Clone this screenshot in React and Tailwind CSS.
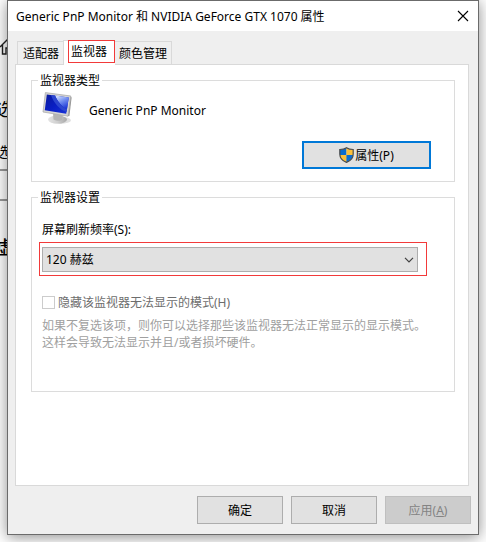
import { useState } from "react";

const TABS = [
  { id: "adapter", label: "适配器" },
  { id: "monitor", label: "监视器" },
  { id: "color", label: "颜色管理" },
];

const RATES = ["120 赫兹", "60 赫兹"];

function MonitorIcon() {
  return (
    <svg viewBox="0 0 32 36" className="w-8 h-9 shrink-0" aria-hidden="true">
      <defs>
        <linearGradient id="screen" x1="0" y1="0" x2="1" y2="1">
          <stop offset="0" stopColor="#0a1a9c" />
          <stop offset="0.5" stopColor="#0a1fc4" />
          <stop offset="1" stopColor="#1a34d8" />
        </linearGradient>
        <linearGradient id="glare" x1="0.1" y1="0" x2="0.6" y2="1">
          <stop offset="0" stopColor="#dfeaff" />
          <stop offset="0.5" stopColor="#6f8cf0" />
          <stop offset="1" stopColor="#1c38d6" />
        </linearGradient>
        <linearGradient id="stand" x1="0" y1="0" x2="1" y2="0">
          <stop offset="0" stopColor="#e4e4e4" />
          <stop offset="0.5" stopColor="#cfcfcf" />
          <stop offset="1" stopColor="#a8a8a8" />
        </linearGradient>
      </defs>
      <ellipse cx="18" cy="28.3" rx="11" ry="3.6" fill="#e0e0e0" />
      <ellipse cx="15.5" cy="27.6" rx="9.5" ry="4" fill="url(#stand)" />
      <path d="M11 21l10 1.2-1 5.6c-2 1.600-6 1.200-8.500-.4z" fill="#b5b5b5" />
      <path d="M28 4l1.600 1.400-2.200 18.600-2 .2z" fill="#8f8f8f" />
      <path d="M3.400.6L28.800 4 26 24.200 1 20z" fill="#d4d4d4" stroke="#adadad" strokeWidth="0.8" />
      <path d="M4.800 2.400L26.800 5.400 24.200 21.800 2.800 18.200z" fill="url(#screen)" />
      <path d="M13 3.500l13.800 1.900L25 17.500C20.500 15.500 15.500 9.500 13 3.500z" fill="url(#glare)" />
      <path d="M9 3l4 .5c2.500 6 7.500 12 12 14l-.4 2.500C18 18 11.500 11 9 3z" fill="#2c46cf" />
    </svg>
  );
}

function ShieldIcon() {
  return (
    <svg viewBox="0 0 15 16" className="w-[15px] h-4 shrink-0" aria-hidden="true">
      <path d="M7.500.7C5.600 2 3 2.500.8 2.500V7c0 4 3 7 6.700 8.400z" fill="#0a6cd0" />
      <path d="M7.500.7C9.400 2 12 2.500 14.200 2.500V7c0 4-3 7-6.700 8.400z" fill="#fcbf3a" />
      <path d="M.8 8h6.700v7.400C4 14 1.100 11.500.8 8z" fill="#fcbf3a" />
      <path d="M14.200 8H7.500v7.400c3.500-1.400 6.400-3.900 6.700-7.400z" fill="#0a6cd0" />
      <path
        d="M7.500.7C5.600 2 3 2.500.8 2.500V7c0 4 3 7 6.700 8.400C11.200 14 14.200 11 14.200 7V2.500C12 2.500 9.400 2 7.500.7z"
        fill="none"
        stroke="#4c4c4c"
        strokeWidth="1.2"
      />
    </svg>
  );
}

// Settings page that the dialog covers; only its left edge stays visible.
function Backdrop() {
  return (
    <div className="absolute inset-0 overflow-hidden text-black" aria-hidden="true">
      <svg viewBox="0 0 18 18" className="absolute top-[37px] -left-px w-[18px] h-[18px]" fill="none" stroke="#222" strokeWidth="1.4">
        <path d="M1 10L9 2l8 8M3.500 8v9H7v-6h4v6h3.500V8" />
      </svg>
      <div className="absolute top-[97px] -left-1 text-lg leading-6">选</div>
      <div className="absolute top-[142px] -left-1 text-sm leading-5">选</div>
      <div className="absolute top-[169px] -left-1 w-24 h-8 border-2 border-[#999]" />
      <div className="absolute top-[235px] -left-1 text-lg leading-6 font-medium">虚</div>
    </div>
  );
}

function TitleBar() {
  return (
    <header className="flex items-center justify-between h-[30px] bg-white pl-2 pr-[9px]">
      <h1>Generic PnP Monitor 和 NVIDIA GeForce GTX 1070 属性</h1>
      <button aria-label="关闭" className="p-0">
        <svg viewBox="0 0 12 12" className="w-3 h-3" fill="none" stroke="#000" strokeWidth="1.1">
          <path d="M1 1l10 10M11 1L1 11" />
        </svg>
      </button>
    </header>
  );
}

function Tabs({ active, onChange }) {
  return (
    <div role="tablist" className="relative z-10 flex items-end pl-[2px] -mb-px">
      {TABS.map((t) =>
        t.id === active ? (
          <button
            key={t.id}
            role="tab"
            aria-selected="true"
            className="relative z-10 h-[25px] -mr-[2px] pl-1 bg-white border-l border-t border-[#d9d9d9] flex items-start"
          >
            <span className="-mt-px h-[23px] w-[47px] pl-[2px] border border-[#f23a3a] flex items-center">
              {t.label}
            </span>
          </button>
        ) : (
          <button
            key={t.id}
            role="tab"
            aria-selected="false"
            onClick={() => onChange(t.id)}
            className="h-[23px] mb-px pl-[5px] pr-1 bg-[#efefef] border-l border-t last:border-r border-[#d9d9d9]"
          >
            {t.label}
          </button>
        )
      )}
    </div>
  );
}

function Group({ title, className, children }) {
  return (
    <fieldset className={`border border-[#dcdcdc] px-[6px] ${className}`}>
      <legend className="px-[2px]">{title}</legend>
      {children}
    </fieldset>
  );
}

function DialogButton({ children, disabled }) {
  return (
    <button
      disabled={disabled}
      className="w-[86px] h-7 bg-[#e1e1e1] border border-[#adadad] disabled:bg-[#cccccc] disabled:border-[#bfbfbf] disabled:text-[#838383]"
    >
      {children}
    </button>
  );
}

export default function App() {
  const [tab, setTab] = useState("monitor");
  const [rate, setRate] = useState(RATES[0]);

  return (
    <div className="relative min-h-screen bg-white px-[7px] pb-[7px] overflow-hidden text-xs leading-[17px] text-black font-['Noto_Sans','Noto_Sans_CJK_SC',sans-serif]">
      <Backdrop />
      <div
        role="dialog"
        className="relative bg-[#efefef] border border-[#6b6b6b] shadow-[0_2px_14px_rgba(0,0,0,0.45)]"
      >
        <TitleBar />
        <div className="pt-[9px] pl-[7px] pr-[9px]">
          <Tabs active={tab} onChange={setTab} />
          <main className="bg-white border border-[#d9d9d9] pt-[7px] pl-[15px] pr-[13px] pb-[93px]">
            <Group title="监视器类型" className="pb-3">
              <div className="flex items-center gap-[15px] pt-[3px] pl-1">
                <MonitorIcon />
                <span>Generic PnP Monitor</span>
              </div>
              <div className="flex justify-end mt-[13px] pr-[17px]">
                <button className="flex items-center justify-center gap-px w-[129px] h-7 bg-[#e1e1e1] border-2 border-[#0078d7]">
                  <ShieldIcon />
                  属性(P)
                </button>
              </div>
            </Group>

            <Group title="监视器设置" className="mt-[7px] pb-10">
              <label htmlFor="rate" className="block pt-[15px] pl-1">
                屏幕刷新频率(S):
              </label>
              <div className="mt-1 ml-px mr-[21px] border border-[#f23a3a] pt-1 pb-[3px] pl-[2px] pr-2">
                <div className="relative">
                  <select
                    id="rate"
                    value={rate}
                    onChange={(e) => setRate(e.target.value)}
                    className="block appearance-none w-full h-[25px] pl-[3px] bg-[#e1e1e1] border border-[#adadad]"
                  >
                    {RATES.map((r) => (
                      <option key={r}>{r}</option>
                    ))}
                  </select>
                  <svg
                    viewBox="0 0 10 6"
                    className="absolute right-1 top-[10px] w-[10px] h-[6px] pointer-events-none"
                    fill="none"
                    stroke="#404040"
                    strokeWidth="1.2"
                  >
                    <path d="M1 .8l4 4 4-4" />
                  </svg>
                </div>
              </div>
              <div className="flex items-center gap-[3px] mt-[18px] pl-1 text-[#6d6d6d]">
                <input
                  id="hide"
                  type="checkbox"
                  disabled
                  className="appearance-none w-[13px] h-[13px] bg-white border border-[#cccccc]"
                />
                <label htmlFor="hide">隐藏该监视器无法显示的模式(H)</label>
              </div>
              <p className="mt-[6px] pl-1 text-[#a0a0a0]">
                如果不复选该项，则你可以选择那些该监视器无法正常显示的显示模式。
                <br />
                这样会导致无法显示并且/或者损坏硬件。
              </p>
            </Group>
          </main>
        </div>
        <footer className="flex justify-end gap-2 pt-[10px] pb-[10px] pr-[7px]">
          <DialogButton>确定</DialogButton>
          <DialogButton>取消</DialogButton>
          <DialogButton disabled>
            应用(<u>A</u>)
          </DialogButton>
        </footer>
      </div>
    </div>
  );
}
